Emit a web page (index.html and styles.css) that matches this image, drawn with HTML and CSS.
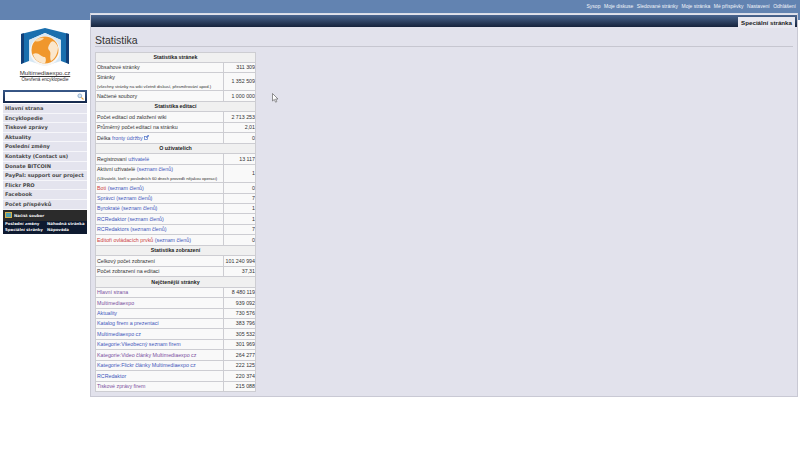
FILE: index.html
```html
<!DOCTYPE html>
<html lang="cs">
<head>
<meta charset="utf-8">
<title>Statistika</title>
<link rel="stylesheet" href="styles.css">
</head>
<body>
<header class="topbar">
  <a>Sysop</a><a>Moje diskuse</a><a>Sledované stránky</a><a>Moje stránka</a><a>Mé příspěvky</a><a>Nastavení</a><a>Odhlášení</a>
</header>
<div class="layout">
  <aside class="sidebar">
    <div class="logo">
      <svg width="50" height="41" viewBox="0 0 50 41">
        <path d="M1 6 L25 0 L49 6 L49 36 L41 33 L41 12 L25 5 L9 12 L9 33 L1 36 Z" fill="#1a6fae"/>
        <path d="M1 6 L4 5.3 L4 34.5 L1 36 Z M46 5.3 L49 6 L49 36 L46 34.5 Z" fill="#123f78"/>
        <path d="M9 12 L25 5 L41 12 L41 33 L25 38 L9 33 Z" fill="#d6e7f4"/>
        <circle cx="25" cy="23" r="15" fill="#f6f6f6"/>
        <circle cx="25" cy="22" r="13.5" fill="#f0972c"/>
        <path d="M13 26 C18 23 21 29 25 29 C27 32 25 35 25 35.5 C18 35 14 31 13 26 Z M31 14 C34 12 36 15 38 19 C38 25 35 31 31 33 C29 28 32 25 29 22 C27 20 29 17 31 14 Z" fill="#fbe7cc"/>
        <path d="M14 13 C17 10 21 9 24 10 C22 13 18 14 14 13 Z" fill="#fbd9a8"/>
      </svg>
      <div class="logo-name">Multimediaexpo.cz</div>
      <div class="logo-sub">Otevřená encyklopedie</div>
    </div>
    <div class="search">
      <div class="search-field">
        <svg width="7" height="7" viewBox="0 0 7 7"><circle cx="2.8" cy="2.8" r="1.9" fill="#d7e6f5" stroke="#7f9fc4" stroke-width=".8"/><path d="M4.3 4.3 L6.5 6.5" stroke="#e0a040" stroke-width="1.1"/></svg>
      </div>
    </div>
    <nav class="menu">
      <a>Hlavní strana</a><a>Encyklopedie</a><a>Tiskové zprávy</a><a>Aktuality</a><a>Poslední změny</a><a>Kontakty (Contact us)</a><a>Donate BITCOIN</a><a>PayPal: support our project</a><a>Flickr PRO</a><a>Facebook</a><a>Počet příspěvků</a>
    </nav>
    <div class="tools">
      <div class="tools-head">
        <svg width="7" height="6" viewBox="0 0 7 6"><rect width="7" height="6" fill="#d8b24a"/><rect x="1" y="1" width="5" height="4" fill="#4fa0b0"/></svg>
        <span>Načíst soubor</span>
      </div>
      <div class="tools-links">
        <a>Poslední změny</a><a>Náhodná stránka</a><a>Speciální stránky</a><a>Nápověda</a>
      </div>
    </div>
  </aside>
  <main class="panel">
    <div class="tabbar"><span class="tab">Speciální stránka</span></div>
    <div class="content">
      <h1>Statistika</h1>
      <table class="stats">
        <colgroup><col class="col-label"><col class="col-value"></colgroup>
        <tr class="head"><th colspan="2">Statistika stránek</th></tr>
        <tr><td>Obsahové stránky</td><td>311 309</td></tr>
        <tr class="two"><td>Stránky<small>(všechny stránky na wiki včetně diskusí, přesměrování apod.)</small></td><td>1 352 509</td></tr>
        <tr><td>Načtené soubory</td><td>1 000 000</td></tr>
        <tr class="head"><th colspan="2">Statistika editací</th></tr>
        <tr><td>Počet editací od založení wiki</td><td>2 713 253</td></tr>
        <tr><td>Průměrný počet editací na stránku</td><td>2,01</td></tr>
        <tr><td>Délka <a class="link">fronty údržby</a> <svg class="ext" width="5" height="5" viewBox="0 0 5 5"><rect x=".5" y="1.5" width="3" height="3" fill="none" stroke="#5577cc" stroke-width=".7"/><path d="M2 3 L4.7 .3 M3 .3 H4.7 V2" fill="none" stroke="#5577cc" stroke-width=".7"/></svg></td><td>0</td></tr>
        <tr class="head"><th colspan="2">O uživatelích</th></tr>
        <tr><td>Registrovaní <a class="link">uživatelé</a></td><td>13 117</td></tr>
        <tr class="two"><td>Aktivní uživatelé <a class="link">(seznam členů)</a><small>(Uživatelé, kteří v posledních 60 dnech provedli nějakou operaci)</small></td><td>1</td></tr>
        <tr><td><a class="new">Boti</a> <a class="link">(seznam členů)</a></td><td>0</td></tr>
        <tr><td><a class="link">Správci (seznam členů)</a></td><td>7</td></tr>
        <tr><td><a class="link">Byrokraté (seznam členů)</a></td><td>1</td></tr>
        <tr><td><a class="link">RCRedaktor (seznam členů)</a></td><td>1</td></tr>
        <tr><td><a class="link">RCRedaktors (seznam členů)</a></td><td>7</td></tr>
        <tr><td><a class="new">Editoři ovládacích prvků</a> <a class="link">(seznam členů)</a></td><td>0</td></tr>
        <tr class="head"><th colspan="2">Statistika zobrazení</th></tr>
        <tr><td>Celkový počet zobrazení</td><td>101 240 994</td></tr>
        <tr><td>Počet zobrazení na editaci</td><td>37,31</td></tr>
        <tr class="head"><th colspan="2">Nejčtenější stránky</th></tr>
        <tr><td><a class="seen">Hlavní strana</a></td><td>8 480 119</td></tr>
        <tr><td><a class="seen">Multimediaexpo</a></td><td>939 092</td></tr>
        <tr><td><a class="link">Aktuality</a></td><td>730 576</td></tr>
        <tr><td><a class="link">Katalog firem a prezentací</a></td><td>383 796</td></tr>
        <tr><td><a class="link">Multimediaexpo cz</a></td><td>305 532</td></tr>
        <tr><td><a class="link">Kategorie:Všeobecný seznam firem</a></td><td>301 969</td></tr>
        <tr><td><a class="seen">Kategorie:Video články Multimediaexpo cz</a></td><td>264 277</td></tr>
        <tr><td><a class="link">Kategorie:Flickr články Multimediaexpo cz</a></td><td>222 125</td></tr>
        <tr><td><a class="link">RCRedaktor</a></td><td>220 374</td></tr>
        <tr><td><a class="seen">Tiskové zprávy firem</a></td><td>215 088</td></tr>
      </table>
    </div>
  </main>
</div>
<svg class="cursor" width="7" height="10" viewBox="0 0 7 10"><path d="M.5 .5 V8 L2.3 6.4 L3.6 9.2 L4.8 8.6 L3.6 6 H6 Z" fill="#fff" stroke="#666" stroke-width=".7"/></svg>
</body>
</html>
```
FILE: styles.css
```css
* { box-sizing: border-box; }
html, body { margin: 0; padding: 0; }
body {
  width: 800px;
  height: 450px;
  overflow: hidden;
  background: #fff;
  font-family: "Liberation Sans", Arial, sans-serif;
  color: #333;
  position: relative;
}
.topbar {
  height: 20px;
  background: #6283b1;
  display: flex;
  justify-content: flex-end;
  gap: 3.6px;
  padding: 3px 4px 0 0;
  font-size: 5px;
  line-height: 7px;
  white-space: nowrap;
  color: #f2f5fa;
}
.layout {
  display: flex;
  align-items: flex-start;
}
.sidebar {
  width: 90px;
  flex: none;
  padding: 8px 3px 0;
}
.logo {
  display: flex;
  flex-direction: column;
  align-items: center;
  color: #333;
}
.logo-name {
  font-size: 6.1px;
  line-height: 8px;
  text-decoration: underline;
}
.logo-sub {
  font-size: 4.6px;
  line-height: 6px;
}
.search {
  margin-top: 7px;
  height: 13px;
  padding: 2px;
  background: linear-gradient(#3a5a8a, #14274a);
}
.search-field {
  height: 9px;
  background: #fff;
  display: flex;
  justify-content: flex-end;
  align-items: center;
  padding-right: 1px;
}
.menu {
  margin-top: 1px;
  display: flex;
  flex-direction: column;
  font-family: "DejaVu Sans", Verdana, sans-serif;
  font-weight: bold;
  font-size: 5.1px;
  color: #484848;
  white-space: nowrap;
}
.menu a {
  height: 9.6px;
  line-height: 8.6px;
  padding-left: 2px;
  background: #e4e4ee;
  border-bottom: 1px solid #f6f6fa;
}
.tools {
  background: #0e1a30;
  font-family: "DejaVu Sans", Verdana, sans-serif;
  font-weight: bold;
  color: #f2f2f2;
  font-size: 3.9px;
  white-space: nowrap;
}
.tools-head {
  height: 11px;
  background: #2b2b2b;
  display: flex;
  align-items: center;
  gap: 2px;
  padding-left: 2px;
}
.tools-links {
  height: 13px;
  display: grid;
  grid-template-columns: 42px 1fr;
  align-content: center;
  line-height: 6px;
  padding-left: 2px;
}
.panel {
  width: 708px;
  height: 384px;
  margin-top: -7px;
  padding-top: 1px;
  background: #e2e2ec;
  border: 1px solid #c9c9d4;
  border-top-color: #d8dde8;
  position: relative;
}
.tabbar {
  height: 12px;
  background: linear-gradient(#4a6690, #16233c);
  display: flex;
  justify-content: flex-end;
  align-items: flex-end;
  padding-right: 2px;
}
.tab {
  height: 11px;
  padding: 0 3px;
  margin-bottom: -1px;
  background: #e8e8f0;
  font-weight: bold;
  font-size: 6.2px;
  line-height: 11px;
  color: #222;
}
.content {
  padding: 0 4px;
}
h1 {
  margin: 7px 0 5px;
  height: 13px;
  font-weight: normal;
  font-size: 10.5px;
  line-height: 13px;
  color: #333;
  border-bottom: 1px solid #c6c6d0;
}
.stats {
  width: 160px;
  table-layout: fixed;
  border-collapse: collapse;
  border: 1px solid #bcbcc4;
  background: #f9f9f9;
  font-size: 5.3px;
}
.col-label { width: 128px; }
.col-value { width: 32px; }
.stats th,
.stats td {
  border: 1px solid #cdcdd2;
  padding: 0;
  height: 10.45px;
  line-height: 6.5px;
  font-weight: normal;
  white-space: nowrap;
  overflow: hidden;
}
.stats td:first-child { padding-left: 1px; }
.stats td:last-child { text-align: right; }
.stats th {
  height: 10.5px;
  background: #f0f0f0;
  font-weight: bold;
  color: #222;
  text-align: center;
}
.stats tr:first-child th { height: 9.5px; }
.stats .two td { height: 18.5px; }
.stats small {
  display: block;
  margin-top: 3px;
  font-size: 4.2px;
  line-height: 5px;
}
.link { color: #3f57bb; }
.seen { color: #7a4f9e; }
.new { color: #cc3f3f; }
.ext { vertical-align: -0.5px; }
.cursor {
  position: absolute;
  left: 272px;
  top: 93px;
}
```
